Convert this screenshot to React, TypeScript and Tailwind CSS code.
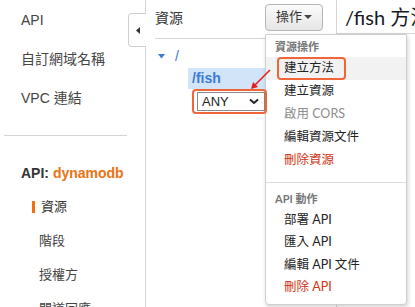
import React from "react";

const cjk = "font-['Liberation_Sans','Noto_Sans_CJK_TC',sans-serif]";
const ui = "font-['Lato','Noto_Sans_CJK_TC',sans-serif]";

function SideNav() {
  return (
    <aside className={`w-[145px] shrink-0 pt-[1px] text-[#444] ${cjk}`}>
      <div className="h-[39px] flex items-center pl-[21px] text-[14px]">API</div>
      <div className="h-[39px] flex items-center pl-[21px] text-[14px]">自訂網域名稱</div>
      <div className="h-[39px] flex items-center pl-[21px] text-[14px]">VPC 連結</div>
      <div className="ml-[4px] w-[123px] mt-[17px] border-t border-[#d5d5d5]" />
      <div className="mt-[20px] h-[34px] flex items-center pl-[21px] text-[14px] font-bold text-[#333]">
        API:&nbsp;<span className="text-[#ec7211]">dynamodb</span>
      </div>
      <div className="h-[34px] flex items-center pl-[32px] text-[13px] text-[#333]">
        <span className="w-[2.5px] h-[12px] bg-[#ec7211] mr-[6.5px]" />
        資源
      </div>
      <div className="h-[34px] flex items-center pl-[39px] text-[13px]">階段</div>
      <div className="h-[34px] flex items-center pl-[39px] text-[13px]">授權方</div>
      <div className="h-[34px] flex items-center pl-[39px] text-[13px]">閘道回應</div>
    </aside>
  );
}

function ResourcePanel() {
  return (
    <section className={`w-[191px] shrink-0 border-l border-[#d5d5d5] ${cjk}`}>
      <div className="ml-[9px] h-[39px] border-b border-[#d5d5d5] flex items-center justify-between pr-[13px]">
        <span className="text-[14px] text-[#333] pb-[1px]">資源</span>
        <button
          className={`mb-[4px] w-[58px] h-[27px] rounded-[4px] border border-[#b5b5b5] bg-gradient-to-b from-[#fbfbfb] to-[#e6e6e6] flex items-center justify-center gap-[2px] text-[13px] text-[#333] ${ui}`}
        >
          操作
          <svg width="8" height="5" viewBox="0 0 8 5">
            <path d="M0 0h8L4 4z" fill="#444" />
          </svg>
        </button>
      </div>
      <div className="mt-[8px] h-[18px] flex items-center pl-[12px] text-[#3a7bd5]">
        <svg width="7" height="5" viewBox="0 0 7 5">
          <path d="M0 0h7L3.5 4.5z" fill="#3a7bd5" />
        </svg>
        <span className="ml-[10px] text-[14px]">/</span>
      </div>
      <div className="mt-[3px] ml-[42px] h-[21px] bg-[#d2e5f8] flex items-center pl-[4px] text-[14px] font-bold text-[#3a7bd5]">
        /fish
      </div>
      <div className="mt-[3px] ml-[51px] w-[68px] h-[19px] border border-[#8a8a8a] bg-white flex items-center justify-between pl-[4px] pr-[5px] text-[13px] text-[#222]">
        ANY
        <svg width="10" height="7" viewBox="0 0 10 7">
          <path d="M1 1.5l4 3.5 4-3.5" stroke="#222" strokeWidth="2" fill="none" />
        </svg>
      </div>
    </section>
  );
}

function MenuItem({ label, tone = "normal", active = false }: { label: string; tone?: "normal" | "muted" | "danger"; active?: boolean }) {
  const color = tone === "danger" ? "text-[#d13212]" : tone === "muted" ? "text-[#8d8d8d]" : "text-[#222]";
  return (
    <div className={`h-[23px] flex items-center pl-[18px] text-[12.5px] ${color} ${active ? "bg-[#f2f2f2]" : ""}`}>
      {label}
    </div>
  );
}

function ActionsMenu() {
  return (
    <div className={`absolute left-[265px] top-[34px] w-[142px] h-[271px] bg-white border border-[#cfcfcf] rounded-b-[4px] shadow-[1px_2px_4px_rgba(0,0,0,0.18)] ${ui}`}>
      <div className="mt-[3px] h-[19px] flex items-center pl-[9px] text-[11px] font-bold text-[#777]">資源操作</div>
      <MenuItem label="建立方法" active />
      <MenuItem label="建立資源" />
      <MenuItem label="啟用 CORS" tone="muted" />
      <MenuItem label="編輯資源文件" />
      <MenuItem label="刪除資源" tone="danger" />
      <div className="mt-[10px] border-t border-[#dcdcdc]" />
      <div className="mt-[7px] h-[19px] flex items-center pl-[9px] text-[11px] font-bold text-[#777]">API 動作</div>
      <div className="[&>div]:h-[22.5px]">
        <MenuItem label="部署 API" />
        <MenuItem label="匯入 API" />
        <MenuItem label="編輯 API 文件" />
        <MenuItem label="刪除 API" tone="danger" />
      </div>
    </div>
  );
}

export default function App() {
  return (
    <div className="relative w-[415px] h-[307px] overflow-hidden bg-white flex">
      <SideNav />
      <ResourcePanel />
      <section className={`flex-1 border-l border-[#d5d5d5] ${ui}`}>
        <div className="h-[34px] border-b border-[#d5d5d5] pl-[8px] flex items-center text-[20px] text-[#16191f] whitespace-nowrap">
          /fish 方法
        </div>
      </section>

      {/* collapse tab */}
      <div className="absolute left-[128px] top-[13px] w-[18px] h-[34px] bg-white border border-r-0 border-[#cfcfcf] rounded-l-[4px] flex items-center justify-center">
        <svg width="4" height="7" viewBox="0 0 4 7">
          <path d="M4 0v7L0 3.5z" fill="#333" />
        </svg>
      </div>

      <ActionsMenu />

      {/* annotations */}
      <div className="absolute left-[192px] top-[89px] w-[75px] h-[25px] border-2 border-[#f0663a] rounded-[4px]" />
      <div className="absolute left-[277px] top-[57px] w-[69px] h-[23px] border-2 border-[#f0663a] rounded-[4px]" />
      <svg className="absolute left-[245px] top-[64px]" width="30" height="30" viewBox="0 0 30 30">
        <path d="M25 6L9 22" stroke="#e3201b" strokeWidth="1.6" />
        <path d="M6 25l2-7 5 5z" fill="#e3201b" />
      </svg>
    </div>
  );
}
